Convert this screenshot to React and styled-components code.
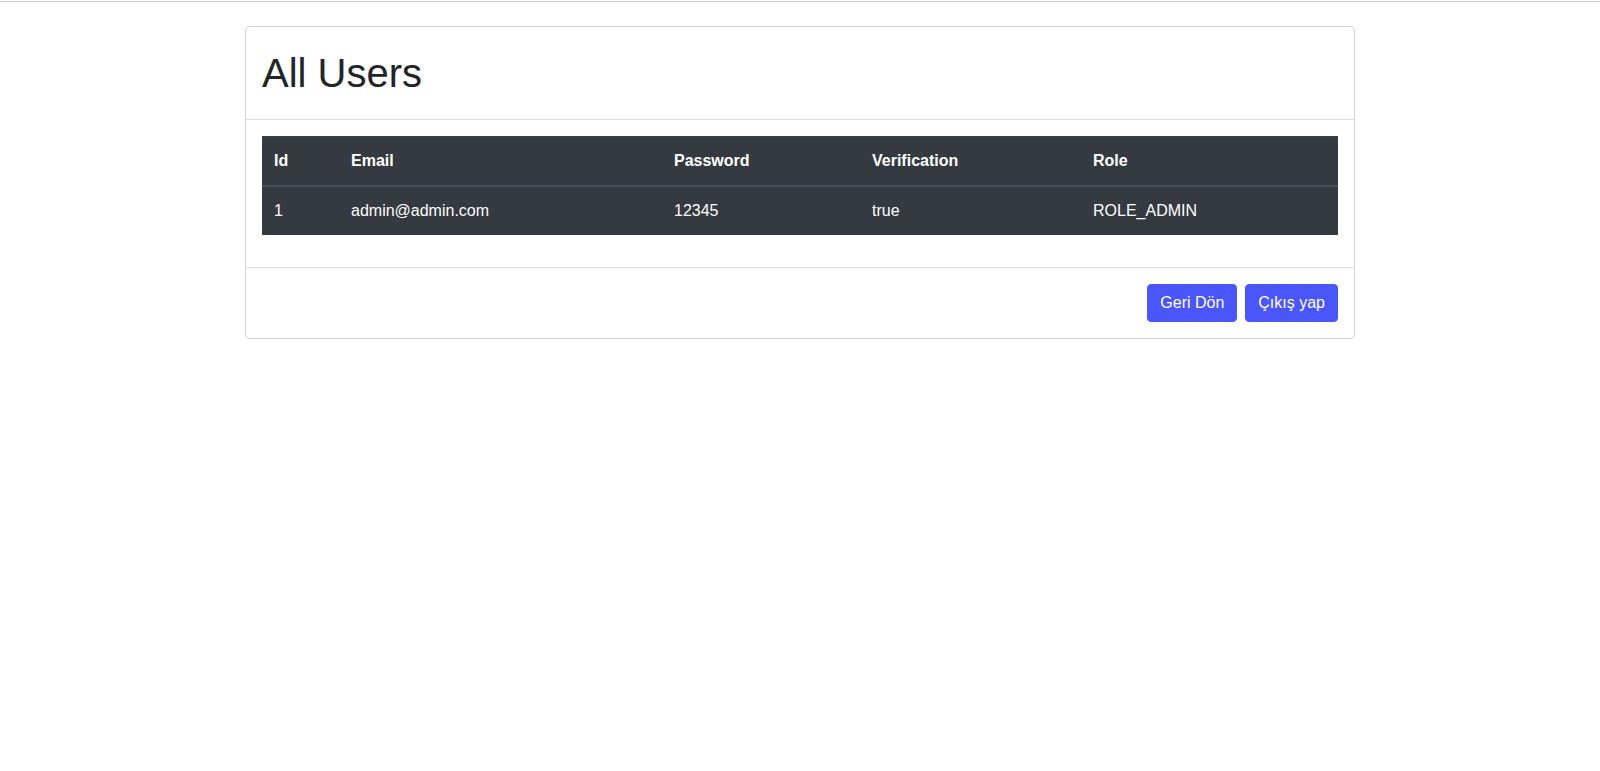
import React from "react";
import styled, { createGlobalStyle } from "styled-components";

const GlobalStyle = createGlobalStyle`
  html, body {
    margin: 0;
    padding: 0;
    background: #fff;
  }
  body {
    font-family: "Liberation Sans", Arial, sans-serif;
    font-size: 16px;
    line-height: 1.5;
    color: #212529;
  }
  * {
    box-sizing: border-box;
  }
`;

const users = [
  { id: 1, email: "admin@admin.com", password: "12345", verification: "true", role: "ROLE_ADMIN" },
];

const columns = [
  { key: "id", label: "Id", width: 77 },
  { key: "email", label: "Email", width: 323 },
  { key: "password", label: "Password", width: 198 },
  { key: "verification", label: "Verification", width: 221 },
  { key: "role", label: "Role" },
];

const App = () => {
  return (
    <>
      <GlobalStyle />
      <TopLine />
      <Container>
        <Card>
          <CardHeader>
            <Title>All Users</Title>
          </CardHeader>
          <CardBody>
            <DarkTable>
              <thead>
                <tr>
                  {columns.map((c) => (
                    <HeadCell key={c.key} $width={c.width}>
                      {c.label}
                    </HeadCell>
                  ))}
                </tr>
              </thead>
              <tbody>
                {users.map((u) => (
                  <tr key={u.id}>
                    {columns.map((c) => (
                      <Cell key={c.key}>{String(u[c.key])}</Cell>
                    ))}
                  </tr>
                ))}
              </tbody>
            </DarkTable>
          </CardBody>
          <CardFooter>
            <Button>Geri Dön</Button>
            <Button>Çıkış yap</Button>
          </CardFooter>
        </Card>
      </Container>
    </>
  );
};

const TopLine = styled.div`
  height: 1px;
  margin-top: 1px;
  background: #c6c9cd;
`;

const Container = styled.div`
  width: 1140px;
  margin: 24px auto 0;
  padding: 0 15px;
`;

const Card = styled.div`
  display: flex;
  flex-direction: column;
  background: #fff;
  border: 1px solid rgba(0, 0, 0, 0.175);
  border-radius: 5px;
`;

const CardHeader = styled.div`
  padding: 22px 16px 14px;
  border-bottom: 1px solid rgba(0, 0, 0, 0.125);
`;

const Title = styled.h1`
  margin: 0 0 8px;
  font-size: 40px;
  font-weight: 500;
  line-height: 1.2;
  color: #212529;
`;

const CardBody = styled.div`
  padding: 16px;
`;

const DarkTable = styled.table`
  width: 100%;
  margin-bottom: 16px;
  border-collapse: collapse;
  table-layout: fixed;
  background: #343a40;
  color: #fff;
  text-align: left;
`;

const HeadCell = styled.th`
  width: ${(p) => (p.$width ? `${p.$width}px` : "auto")};
  padding: 12px;
  font-weight: 700;
  line-height: 24px;
  border-top: 1px solid #3c4248;
  border-bottom: 2px solid #454d55;
`;

const Cell = styled.td`
  padding: 12px;
  line-height: 24px;
  border-top: 1px solid #454d55;
`;

const CardFooter = styled.div`
  display: flex;
  justify-content: flex-end;
  gap: 8px;
  padding: 16px;
  border-top: 1px solid rgba(0, 0, 0, 0.125);
`;

const Button = styled.button`
  font-family: "Liberation Sans", Arial, sans-serif;
  font-size: 16px;
  line-height: 24px;
  padding: 6px 12px;
  color: #fff;
  background: #4a56fa;
  border: 1px solid #4a56fa;
  border-radius: 4px;
  cursor: pointer;
`;

export default App;
